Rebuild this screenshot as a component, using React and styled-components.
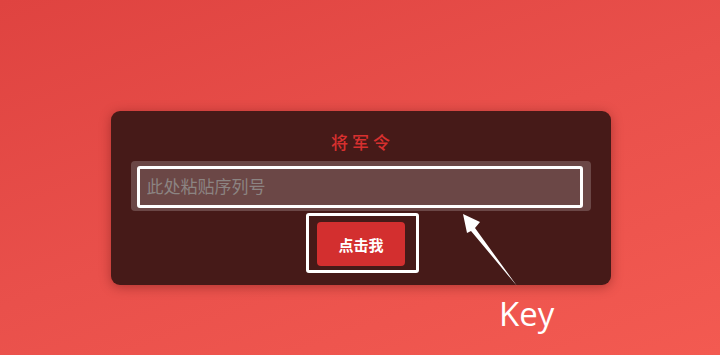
import React from 'react';
import styled, { createGlobalStyle } from 'styled-components';

const GlobalStyle = createGlobalStyle`
  html, body {
    margin: 0;
    padding: 0;
  }
  body {
    font-family: "Noto Sans CJK SC", "Noto Sans", sans-serif;
  }
`;

const Page = styled.div`
  position: relative;
  width: 720px;
  height: 355px;
  overflow: hidden;
  box-sizing: border-box;
  padding-top: 111px;
  padding-left: 1px;
  background: linear-gradient(160deg, #df4340 0%, #e9504b 50%, #f35a51 100%);
`;

const Card = styled.div`
  width: 500px;
  margin: 0 auto;
  box-sizing: border-box;
  padding: 20px 20px 12px;
  background: #461a18;
  border-radius: 9px;
  box-shadow: 0 2px 12px rgba(60, 0, 0, 0.35);
`;

const Title = styled.h2`
  margin: 0 0 8px;
  font-size: 17px;
  line-height: 22px;
  font-weight: 500;
  letter-spacing: 4px;
  text-indent: 4px;
  text-align: center;
  color: #d7302f;
`;

const InputWrap = styled.div`
  height: 50px;
  box-sizing: border-box;
  padding: 5px 8px 3px 6px;
  background: rgba(255, 255, 255, 0.2);
  border-radius: 4px;
`;

const SerialInput = styled.input`
  width: 100%;
  height: 100%;
  box-sizing: border-box;
  border: 3px solid #ffffff;
  border-radius: 3px;
  background: transparent;
  padding: 0 7px 3px;
  font-family: "Noto Sans CJK SC", sans-serif;
  font-size: 17px;
  color: #ddd;
  outline: none;

  &::placeholder {
    color: #8c8482;
  }
`;

const ButtonRow = styled.div`
  display: flex;
  justify-content: center;
  margin-top: 2px;
  padding-left: 4px;
`;

const Highlight = styled.div`
  border: 3px solid #ffffff;
  border-radius: 3px;
  padding: 6px 11px 4px 8px;
`;

const GoButton = styled.button`
  width: 88px;
  height: 44px;
  border: none;
  border-radius: 4px;
  background: #d32f2f;
  color: #fff;
  font-family: "Noto Sans CJK SC", sans-serif;
  font-size: 15px;
  font-weight: 700;
  cursor: pointer;
`;

const Annotation = styled.svg`
  position: absolute;
  left: 0;
  top: 0;
  pointer-events: none;
`;

const KeyLabel = styled.span`
  position: absolute;
  left: 499px;
  top: 291px;
  font-family: "Open Sans", sans-serif;
  font-size: 33px;
  line-height: 45px;
  color: #ffffff;
`;

export default function App() {
  return (
    <>
      <GlobalStyle />
      <Page>
        <Card>
          <Title>将军令</Title>
          <InputWrap>
            <SerialInput placeholder="此处粘贴序列号" />
          </InputWrap>
          <ButtonRow>
            <Highlight>
              <GoButton>点击我</GoButton>
            </Highlight>
          </ButtonRow>
        </Card>
        <Annotation width="720" height="355" viewBox="0 0 720 355">
          <polygon
            points="463,214 480,222 475,228 517,286 471,231 467,233"
            fill="#ffffff"
          />
        </Annotation>
        <KeyLabel>Key</KeyLabel>
      </Page>
    </>
  );
}
